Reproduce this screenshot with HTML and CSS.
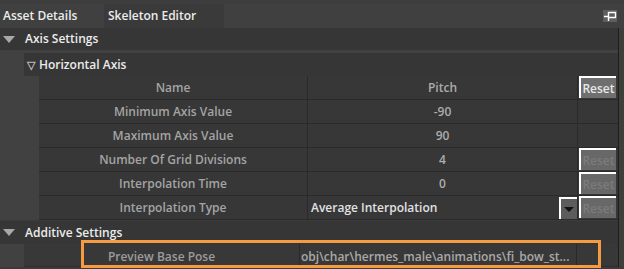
FILE: index.html
```html
<!DOCTYPE html>
<html lang="en">
<head>
    <meta charset="UTF-8">
    <title>Asset Details</title>
    <link rel="stylesheet" href="styles.css">
</head>
<body>
    <div class="window">
        <div class="tabs">
            <div class="tab active">Asset Details</div>
            <div class="tab">Skeleton Editor</div>
            <div class="tab-fill">
                <span class="pin">
                    <svg width="14" height="12" viewBox="0 0 14 12">
                        <path d="M1 6.5H5.5M5.5 2V11M5.5 2.5H12.5V7.5H5.5" stroke="#fff" stroke-width="1.4" fill="none"/>
                    </svg>
                </span>
            </div>
        </div>

        <div class="panel">
            <div class="main">
                <div class="section-head"><span class="tri"></span>Axis Settings</div>
                <div class="section-body">
                    <div class="group-head"><span class="tri-open">&#9661;</span>Horizontal Axis</div>
                    <div class="table">
                        <div class="row">
                            <div class="cell name">Name</div>
                            <div class="cell value">Pitch</div>
                            <div class="cell reset"><span class="btn">Reset</span></div>
                        </div>
                        <div class="row">
                            <div class="cell name">Minimum Axis Value</div>
                            <div class="cell value">-90</div>
                            <div class="cell reset"></div>
                        </div>
                        <div class="row">
                            <div class="cell name">Maximum Axis Value</div>
                            <div class="cell value">90</div>
                            <div class="cell reset"></div>
                        </div>
                        <div class="row">
                            <div class="cell name">Number Of Grid Divisions</div>
                            <div class="cell value">4</div>
                            <div class="cell reset"><span class="btn off">Reset</span></div>
                        </div>
                        <div class="row">
                            <div class="cell name">Interpolation Time</div>
                            <div class="cell value">0</div>
                            <div class="cell reset"><span class="btn off">Reset</span></div>
                        </div>
                        <div class="row">
                            <div class="cell name">Interpolation Type</div>
                            <div class="cell value combo">
                                <span class="combo-text">Average Interpolation</span>
                                <span class="drop"><span class="arrow"></span></span>
                            </div>
                            <div class="cell reset"><span class="btn off">Reset</span></div>
                        </div>
                    </div>
                </div>

                <div class="section-head additive"><span class="tri"></span>Additive Settings</div>
                <div class="section-body flat">
                    <div class="prop-row">
                        <div class="cell pname">Preview Base Pose</div>
                        <div class="cell path">obj\char\hermes_male\animations\fi_bow_st...</div>
                        <div class="cell preset"></div>
                    </div>
                    <div class="highlight"></div>
                </div>
            </div>
            <div class="edge"></div>
        </div>
    </div>
</body>
</html>
```

FILE: styles.css
```css
body { margin: 0; background: #3b3b3b; font: 600 12px "Open Sans", sans-serif; color: #a4a4a4; }
.window { width: 624px; height: 269px; overflow: hidden; }

.tabs { display: flex; height: 28px; padding-top: 4px; box-sizing: border-box; background: #3d3d3d; color: #ececec; }
.tab { width: 101px; padding-left: 3px; line-height: 23px; background: #404040; }
.tab + .tab { width: 116px; padding-left: 4px; background: #3a3a3a; }
.tab-fill { flex: 1; display: flex; justify-content: flex-end; padding-top: 6px; padding-right: 7px; background: #404040; }
.pin { width: 14px; height: 12px; background: #5e5e5e; }
.pin svg { display: block; }

.panel { display: flex; }
.main { width: 618px; }
.edge { width: 1px; background: #1e1e1e; border-right: 5px solid #3d3f39; }

.section-head { height: 22px; line-height: 22px; background: #363636; color: #ececec; display: flex; align-items: center; }
.section-head.additive { margin-top: 1px; height: 23px; }
.tri { width: 0; height: 0; margin: 0 10px 0 3px; border-left: 6px solid transparent; border-right: 6px solid transparent; border-top: 7px solid #a8a8a8; }

.section-body { position: relative; background: #414141; padding: 3px 0 0 24px; }
.section-body.flat { padding-top: 0; }

.group-head { height: 23px; line-height: 23px; background: #363636; color: #ececec; display: flex; }
.tri-open { width: 12px; padding-left: 3px; color: #b8b8b8; font-size: 11px; }

.table { margin-left: 15px; background: #373737; }
.row { display: grid; grid-template-columns: 269px 270px 40px; height: 24px; }
.cell { box-sizing: border-box; border-bottom: 1px solid #2a2a2a; display: flex; align-items: center; justify-content: center; }
.name { border-right: 1px solid #2a2a2a; }
.value { border-right: 1px solid #2a2a2a; color: #acacac; }
.reset { align-items: stretch; padding: 0 2px 1px 1px; border-bottom: 1px solid #2a2a2a; }
.row:first-child .reset { padding-top: 0; }

.btn { flex: 1; display: flex; align-items: center; justify-content: center; border-top: 2px solid #fff; border-left: 2px solid #fff; background: #6f6f6f; color: #e8e8e8; }
.btn.off { background: #686868; color: #7b7b7b; }

.combo { justify-content: space-between; padding-left: 3px; }
.combo-text { color: #e2e2e2; }
.drop { align-self: stretch; width: 16px; margin: 1px 0 0; border-top: 2px solid #fff; border-left: 2px solid #fff; background: #5c5c5c; display: flex; align-items: center; justify-content: center; }
.arrow { width: 0; height: 0; border-left: 5px solid transparent; border-right: 5px solid transparent; border-top: 5px solid #111; }

.prop-row { display: grid; grid-template-columns: 276px 277px 41px; height: 23px; background: #383838; }
.prop-row .cell { border-bottom: 1px solid #2d2d2d; }
.pname { border-right: 1px solid #2a2a2a; color: #9c9c9c; padding-top: 2px; }
.path { justify-content: flex-start; overflow: hidden; white-space: nowrap; padding-left: 1px; border-right: 1px solid #2a2a2a; color: #a9a9a9; padding-top: 2px; }

.highlight { position: absolute; left: 81px; top: -4px; width: 520px; height: 28px; box-sizing: border-box; border: 3px solid #f59b42; }
```
